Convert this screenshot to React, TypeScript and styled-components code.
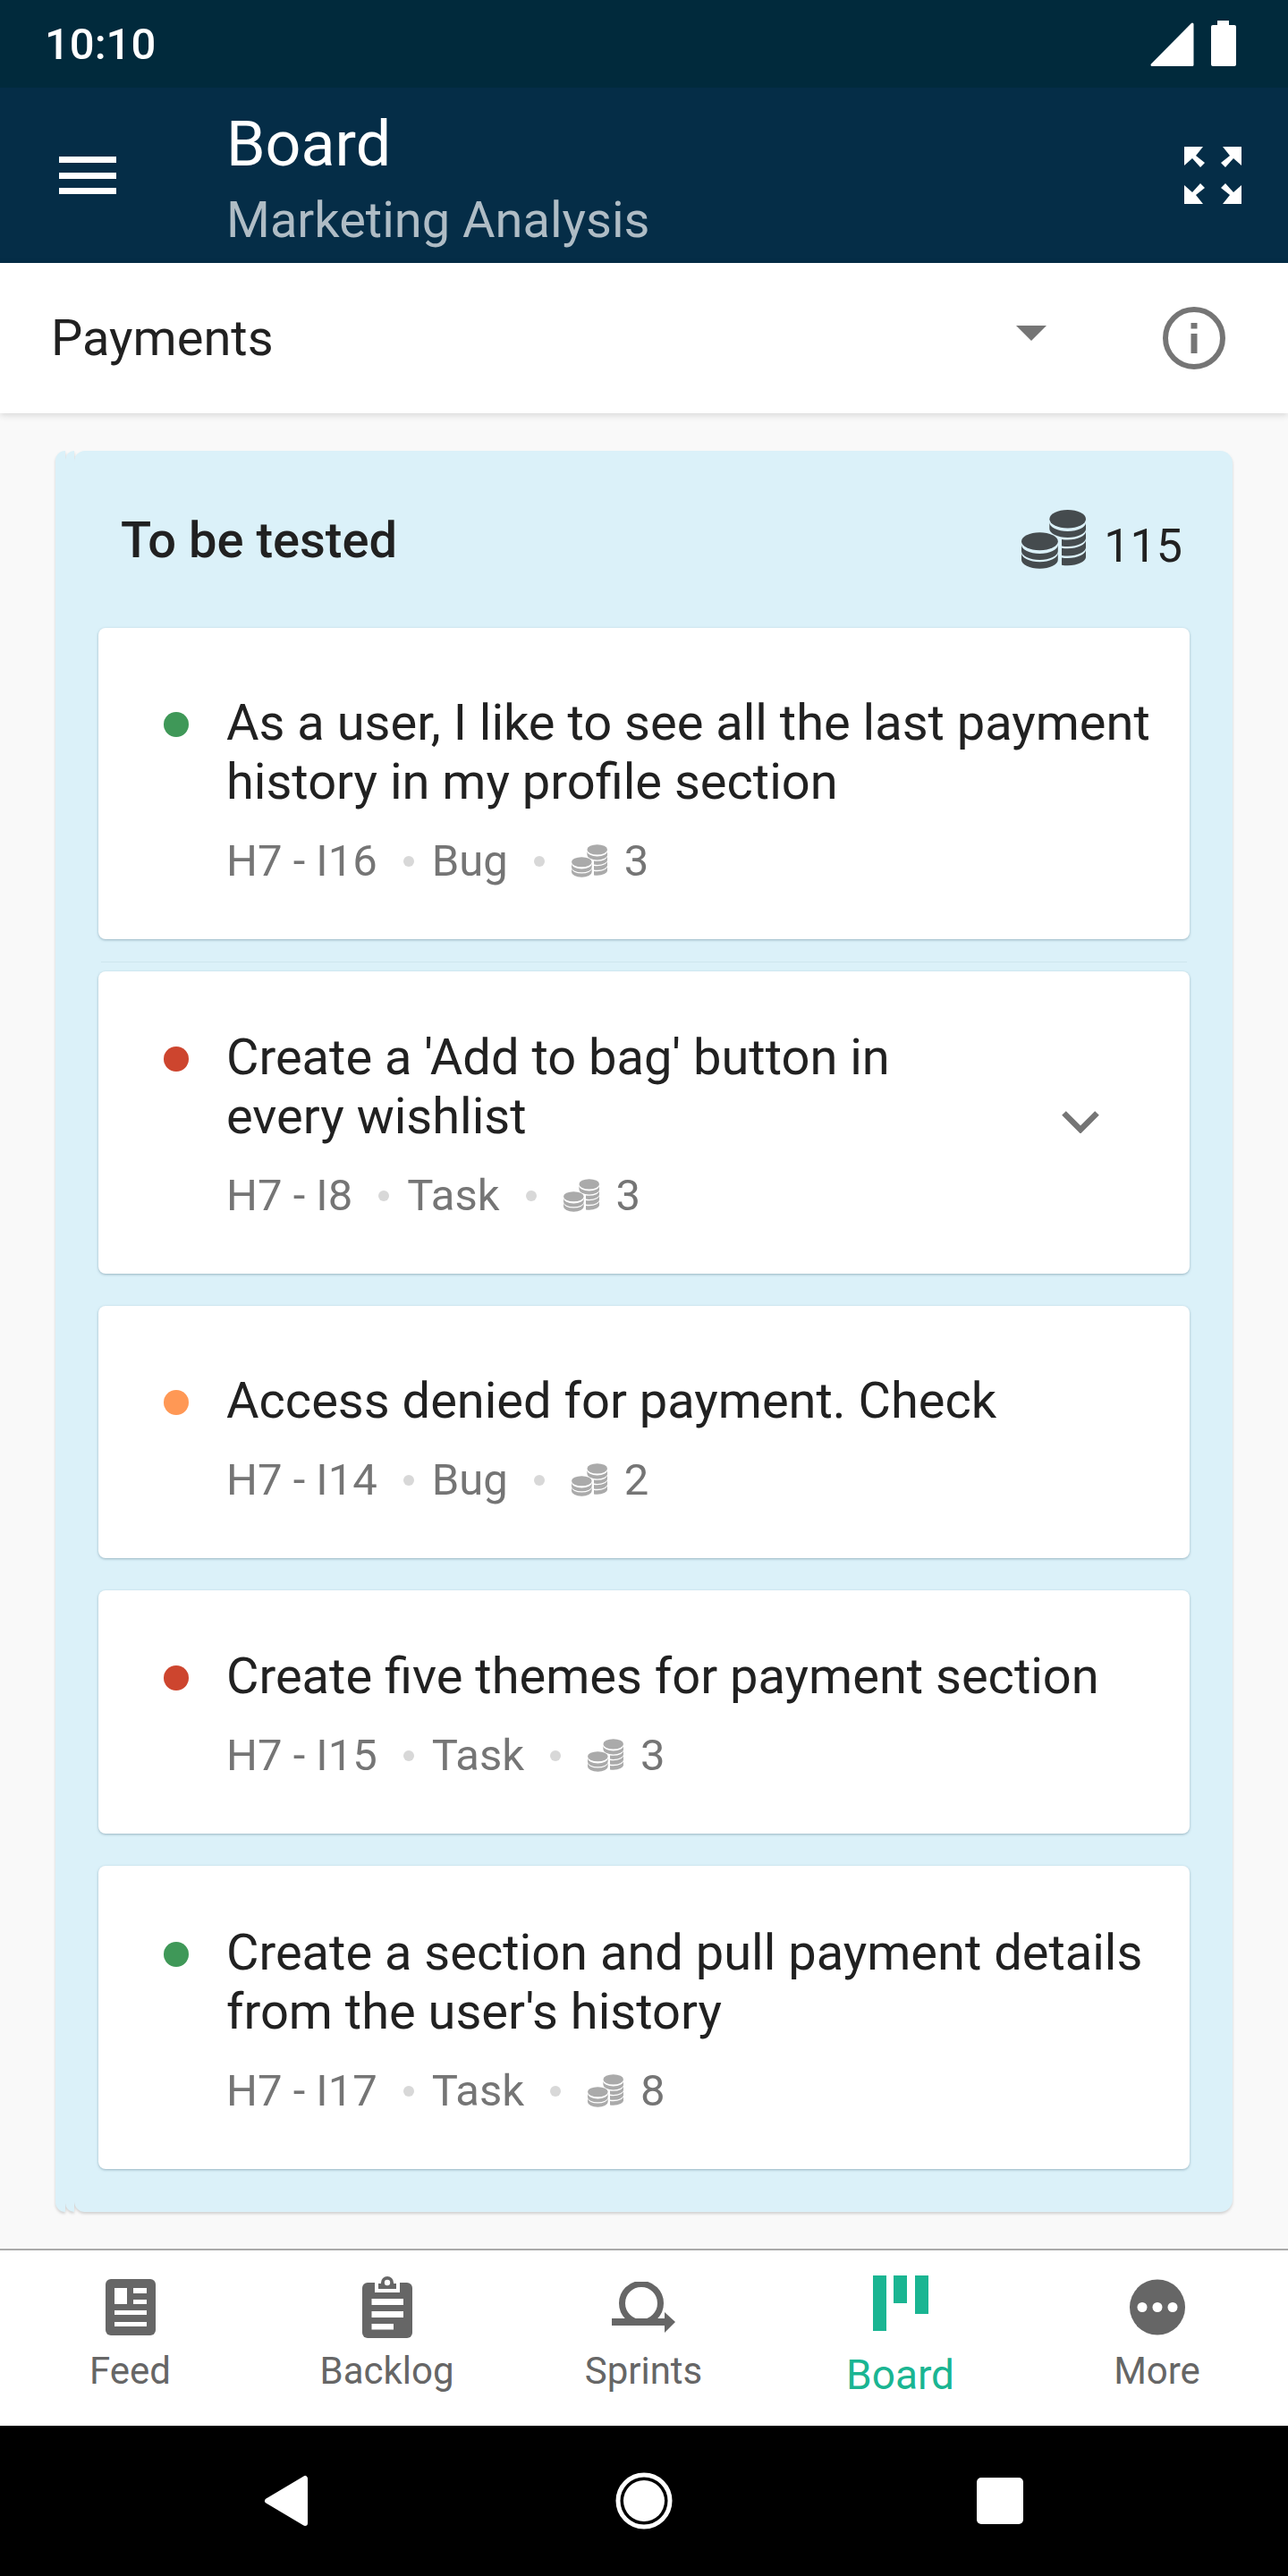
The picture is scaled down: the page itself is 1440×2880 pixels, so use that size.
import { styled, createGlobalStyle } from 'styled-components';

const GlobalStyle = createGlobalStyle`
  * {
    box-sizing: border-box;
  }
  html,
  body {
    margin: 0;
    padding: 0;
    background: #f9f9f9;
  }
  body {
    font-family: Roboto, 'Liberation Sans', sans-serif;
  }
`;

type Issue = {
  title: string;
  code: string;
  kind: string;
  points: number;
  dot: string;
  top: number;
  expandable?: boolean;
  rule?: boolean;
};

const issues: Issue[] = [
  {
    title: 'As a user, I like to see all the last payment\nhistory in my profile section',
    code: 'H7 - I16',
    kind: 'Bug',
    points: 3,
    dot: '#3f9858',
    top: 73,
    rule: true,
  },
  {
    title: "Create a 'Add to bag' button in\nevery wishlist",
    code: 'H7 - I8',
    kind: 'Task',
    points: 3,
    dot: '#cd452e',
    top: 63,
    expandable: true,
  },
  {
    title: 'Access denied for payment. Check',
    code: 'H7 - I14',
    kind: 'Bug',
    points: 2,
    dot: '#ff9855',
    top: 73,
  },
  {
    title: 'Create five themes for payment section',
    code: 'H7 - I15',
    kind: 'Task',
    points: 3,
    dot: '#cd452e',
    top: 63,
  },
  {
    title: "Create a section and pull payment details\nfrom the user's history",
    code: 'H7 - I17',
    kind: 'Task',
    points: 8,
    dot: '#3f9858',
    top: 64,
  },
];

const band = (cx: number, y: number, h: number, rx = 20.4, ry = 10) =>
  `M${cx - rx} ${y}A${rx} ${ry} 0 0 0 ${cx + rx} ${y}V${y + h}A${rx} ${ry} 0 0 1 ${cx - rx} ${y + h}Z`;

const CoinsIcon = ({ width, height, color }: { width: number; height: number; color: string }) => (
  <svg width={width} height={height} viewBox="0 0 72 66" fill={color}>
    <defs>
      <clipPath id="coin-back">
        <rect x="45" y="0" width="27" height="66" />
      </clipPath>
    </defs>
    <ellipse cx="51.7" cy="10.3" rx="20.3" ry="10.3" />
    <path d={band(51.7, 14, 7)} />
    <g clipPath="url(#coin-back)">
      <path d={band(51.7, 23.5, 7.4)} />
      <path d={band(51.7, 33.3, 8.2)} />
      <path d={band(51.7, 44, 8.2)} />
    </g>
    <ellipse cx="20.4" cy="35.2" rx="20.4" ry="10" />
    <path d={band(20.4, 39, 7)} />
    <path d={band(20.4, 48.3, 7.4)} />
  </svg>
);

const ExpandIcon = () => {
  const arrow = '0,0 21,0 13,10 23,18 18,23 9,13 0,21';
  return (
    <svg width="64" height="64" viewBox="0 0 64 64" fill="#fff">
      <polygon points={arrow} />
      <polygon points={arrow} transform="translate(64 0) scale(-1 1)" />
      <polygon points={arrow} transform="translate(0 64) scale(1 -1)" />
      <polygon points={arrow} transform="translate(64 64) scale(-1 -1)" />
    </svg>
  );
};

const FeedIcon = () => (
  <svg width="56" height="63" viewBox="0 0 56 63">
    <rect width="56" height="63" rx="6" fill="#666" />
    <g fill="#fff">
      <rect x="10" y="10" width="14" height="18" />
      <rect x="31" y="10" width="15" height="6" />
      <rect x="31" y="23" width="15" height="5" />
      <rect x="10" y="35" width="36" height="5" />
      <rect x="10" y="48" width="36" height="5" />
    </g>
  </svg>
);

const BacklogIcon = () => (
  <svg width="56" height="69" viewBox="0 0 56 69">
    <rect y="7" width="56" height="62" rx="6" fill="#666" />
    <rect x="14" y="4" width="28" height="14" fill="#fff" />
    <path d="M18 14h20V8h-4.5a6 6 0 0 0-11 0H18z" fill="#666" />
    <path d="M28 0a7 7 0 0 1 7 7v1H21V7a7 7 0 0 1 7-7z" fill="#666" />
    <circle cx="28" cy="7" r="3.2" fill="#fff" />
    <g fill="#fff">
      <rect x="10.5" y="25" width="35.5" height="7" />
      <rect x="10.5" y="39" width="35.5" height="7" />
      <rect x="10.5" y="53" width="24.5" height="6.5" />
    </g>
  </svg>
);

const SprintsIcon = () => (
  <svg width="72" height="57" viewBox="0 0 72 57" fill="#666">
    <circle cx="33" cy="24" r="21.5" fill="none" stroke="#666" strokeWidth="7" />
    <rect y="41" width="60" height="8" />
    <polygon points="59,34 71,45 59,57" />
  </svg>
);

const BoardIcon = () => (
  <svg width="62" height="62" viewBox="0 0 62 62" fill="#1ab592">
    <rect width="15" height="62" />
    <rect x="23" width="15" height="31" />
    <rect x="47" width="15" height="43" />
  </svg>
);

const MoreIcon = () => (
  <svg width="62" height="63" viewBox="0 0 62 63">
    <circle cx="31" cy="31.5" r="31" fill="#666" />
    <g fill="#fff">
      <circle cx="14" cy="31.5" r="5.5" />
      <circle cx="31" cy="31.5" r="5.5" />
      <circle cx="48" cy="31.5" r="5.5" />
    </g>
  </svg>
);

const tabs = [
  { label: 'Feed', icon: <FeedIcon /> },
  { label: 'Backlog', icon: <BacklogIcon /> },
  { label: 'Sprints', icon: <SprintsIcon /> },
  { label: 'Board', icon: <BoardIcon />, active: true },
  { label: 'More', icon: <MoreIcon /> },
];

const App = () => {
  return (
    <Screen>
      <GlobalStyle />
      <StatusBar>
        <Clock>10:10</Clock>
        <StatusIcons>
          <svg width="49" height="49" viewBox="0 0 49 49" fill="#fff" stroke="#fff" strokeWidth="3" strokeLinejoin="round">
            <polygon points="47,2 47,47.5 2,47.5" />
          </svg>
          <Battery />
        </StatusIcons>
      </StatusBar>

      <AppBar>
        <MenuButton>
          <span />
          <span />
          <span />
        </MenuButton>
        <Heading>
          <Title>Board</Title>
          <Subtitle>Marketing Analysis</Subtitle>
        </Heading>
        <ExpandIcon />
      </AppBar>

      <FilterBar>
        <FilterLabel>Payments</FilterLabel>
        <Caret />
        <svg width="70" height="70" viewBox="0 0 70 70">
          <circle cx="35" cy="35" r="32" fill="none" stroke="#757575" strokeWidth="6" />
          <rect x="31.5" y="18" width="7" height="6.5" fill="#757575" />
          <rect x="31.5" y="30" width="7" height="22" fill="#757575" />
        </svg>
      </FilterBar>

      <Content>
        <Column>
          <ColumnHeader>
            <ColumnName>To be tested</ColumnName>
            <ColumnPoints>
              <CoinsIcon width={72} height={66} color="#454b4e" />
              <PointsTotal>115</PointsTotal>
            </ColumnPoints>
          </ColumnHeader>
          <CardList>
            {issues.map((issue) => (
              <Card key={issue.code} $top={issue.top} $rule={issue.rule}>
                <Dot $color={issue.dot} />
                <CardBody>
                  <CardTitle>{issue.title}</CardTitle>
                  <Meta>
                    <span>{issue.code}</span>
                    <MetaDot />
                    <span>{issue.kind}</span>
                    <MetaDot />
                    <MetaPoints>
                      <CoinsIcon width={40} height={37} color="#aaaaaa" />
                      <span>{issue.points}</span>
                    </MetaPoints>
                  </Meta>
                </CardBody>
                {issue.expandable && (
                  <Chevron width="42" height="25" viewBox="0 0 42 25">
                    <polyline points="2.5,2.5 21,21 39.5,2.5" fill="none" stroke="#757575" strokeWidth="6.5" />
                  </Chevron>
                )}
              </Card>
            ))}
          </CardList>
        </Column>
      </Content>

      <TabBar>
        {tabs.map((tab) => (
          <Tab key={tab.label}>
            <TabIcon $active={tab.active}>{tab.icon}</TabIcon>
            <TabLabel $active={tab.active}>{tab.label}</TabLabel>
          </Tab>
        ))}
      </TabBar>

      <SystemNav>
        <NavSlot>
          <svg width="50" height="58" viewBox="0 0 50 58" fill="#fff" stroke="#fff" strokeWidth="6" strokeLinejoin="round">
            <polygon points="46,4 46,54 4,29" />
          </svg>
        </NavSlot>
        <NavSlot>
          <svg width="64" height="64" viewBox="0 0 64 64" fill="#fff">
            <circle cx="32" cy="32" r="29" fill="none" stroke="#fff" strokeWidth="5" />
            <circle cx="32" cy="32" r="23" />
          </svg>
        </NavSlot>
        <NavSlot>
          <StopKey />
        </NavSlot>
      </SystemNav>
    </Screen>
  );
};

export default App;

const Screen = styled.div`
  width: 1440px;
  height: 2880px;
  display: flex;
  flex-direction: column;
  overflow: hidden;
  background: #f9f9f9;
`;

const StatusBar = styled.div`
  height: 98px;
  flex: none;
  display: flex;
  align-items: center;
  justify-content: space-between;
  padding: 0 58px 0 50px;
  background: #012a3c;
`;

const Clock = styled.div`
  font-size: 49px;
  font-weight: 500;
  color: #fff;
`;

const StatusIcons = styled.div`
  display: flex;
  align-items: flex-end;
  gap: 19px;
  margin-top: 1px;
`;

const Battery = styled.div`
  position: relative;
  width: 28px;
  height: 46px;
  border-radius: 2px;
  background: #fff;
  &::before {
    content: '';
    position: absolute;
    top: -5px;
    left: 7px;
    width: 13px;
    height: 5px;
    background: #fff;
  }
`;

const AppBar = styled.header`
  height: 196px;
  flex: none;
  display: flex;
  align-items: center;
  padding: 0 52px 0 66px;
  background: #052d47;
`;

const MenuButton = styled.div`
  width: 64px;
  height: 42px;
  flex: none;
  display: flex;
  flex-direction: column;
  justify-content: space-between;
  span {
    display: block;
    height: 7px;
    background: #fff;
  }
`;

const Heading = styled.div`
  flex: 1;
  margin-left: 123px;
  padding-top: 8px;
`;

const Title = styled.div`
  font-size: 70px;
  line-height: 84px;
  color: #fff;
`;

const Subtitle = styled.div`
  margin-top: 8px;
  font-size: 56px;
  line-height: 70px;
  color: #afbcc5;
`;

const FilterBar = styled.div`
  position: relative;
  height: 168px;
  flex: none;
  display: flex;
  align-items: center;
  padding: 0 70px 0 57px;
  background: #fff;
  box-shadow: 0 2px 8px rgba(0, 0, 0, 0.14);
`;

const FilterLabel = styled.div`
  flex: 1;
  font-size: 56px;
  color: #212121;
`;

const Caret = styled.div`
  width: 0;
  height: 0;
  margin: 0 130px 12px 0;
  border-left: 17.5px solid transparent;
  border-right: 17.5px solid transparent;
  border-top: 17px solid #757575;
`;

const Content = styled.main`
  flex: 1;
  padding: 42px 62px 0 83px;
`;

const Column = styled.section`
  position: relative;
  padding: 0 48px 48px 27px;
  background: #dbf1f9;
  border-radius: 12px 14px 14px 12px;
  filter: drop-shadow(0 2px 1.5px rgba(0, 0, 0, 0.16));
  &::before,
  &::after {
    content: '';
    position: absolute;
    top: 0;
    bottom: 0;
    background: #dbf1f9;
    border-radius: 12px 0 0 12px;
  }
  &::before {
    left: -21px;
    width: 11px;
  }
  &::after {
    left: -10px;
    width: 10px;
  }
`;

const ColumnHeader = styled.div`
  height: 198px;
  display: flex;
  align-items: center;
  justify-content: space-between;
  padding: 0 8px 0 25px;
`;

const ColumnName = styled.h2`
  margin: 2px 0 0;
  font-size: 56px;
  font-weight: 500;
  color: #212121;
`;

const ColumnPoints = styled.div`
  display: flex;
  align-items: center;
  gap: 20px;
`;

const PointsTotal = styled.span`
  margin-top: 14px;
  font-size: 52px;
  color: #212121;
`;

const CardList = styled.div`
  display: flex;
  flex-direction: column;
  gap: 36px;
`;

const Card = styled.article<{ $top: number; $rule?: boolean }>`
  position: relative;
  display: flex;
  padding: ${(p) => p.$top}px 0 60px 73px;
  background: #fff;
  border-radius: 8px;
  box-shadow: 0 1px 3px rgba(50, 90, 110, 0.4);
  ${(p) =>
    p.$rule &&
    `&::after {
      content: '';
      position: absolute;
      left: 3px;
      right: 3px;
      bottom: -26px;
      height: 1px;
      background: rgba(60, 100, 120, 0.08);
    }`}
`;

const Dot = styled.span<{ $color: string }>`
  width: 28px;
  height: 28px;
  flex: none;
  margin-top: 21px;
  border-radius: 50%;
  background: ${(p) => p.$color};
`;

const CardBody = styled.div`
  flex: 1;
  margin-left: 42px;
`;

const CardTitle = styled.div`
  font-size: 56px;
  line-height: 66px;
  white-space: pre;
  color: #212121;
`;

const Meta = styled.div`
  display: flex;
  align-items: center;
  height: 56px;
  margin-top: 27px;
  font-size: 49px;
  color: #757575;
`;

const MetaDot = styled.span`
  width: 12px;
  height: 12px;
  flex: none;
  margin: 2px 20px 0 29px;
  border-radius: 50%;
  background: #d8d8d8;
`;

const MetaPoints = styled.span`
  display: flex;
  align-items: center;
  gap: 19px;
  margin-left: 10px;
`;

const Chevron = styled.svg`
  flex: none;
  align-self: center;
  margin: 0 101px 5px 0;
`;

const TabBar = styled.nav`
  height: 198px;
  flex: none;
  display: grid;
  grid-template-columns: repeat(5, 1fr);
  padding: 28px 3px 0 2px;
  background: #fff;
  border-top: 2px solid #aaaaaa;
`;

const Tab = styled.div`
  display: flex;
  flex-direction: column;
  align-items: center;
`;

const TabIcon = styled.div<{ $active?: boolean }>`
  height: 70px;
  display: flex;
  justify-content: center;
  align-items: ${(p) => (p.$active ? 'flex-start' : 'center')};
`;

const TabLabel = styled.div<{ $active?: boolean }>`
  margin-top: ${(p) => (p.$active ? 16 : 12)}px;
  font-size: ${(p) => (p.$active ? 46 : 42)}px;
  line-height: 50px;
  color: ${(p) => (p.$active ? '#1ab592' : '#666666')};
`;

const SystemNav = styled.div`
  height: 168px;
  flex: none;
  display: flex;
  justify-content: center;
  background: #000;
`;

const NavSlot = styled.div`
  width: 400px;
  display: flex;
  align-items: center;
  justify-content: center;
`;

const StopKey = styled.div`
  width: 52px;
  height: 52px;
  margin-right: 4px;
  border-radius: 5px;
  background: #fff;
`;
